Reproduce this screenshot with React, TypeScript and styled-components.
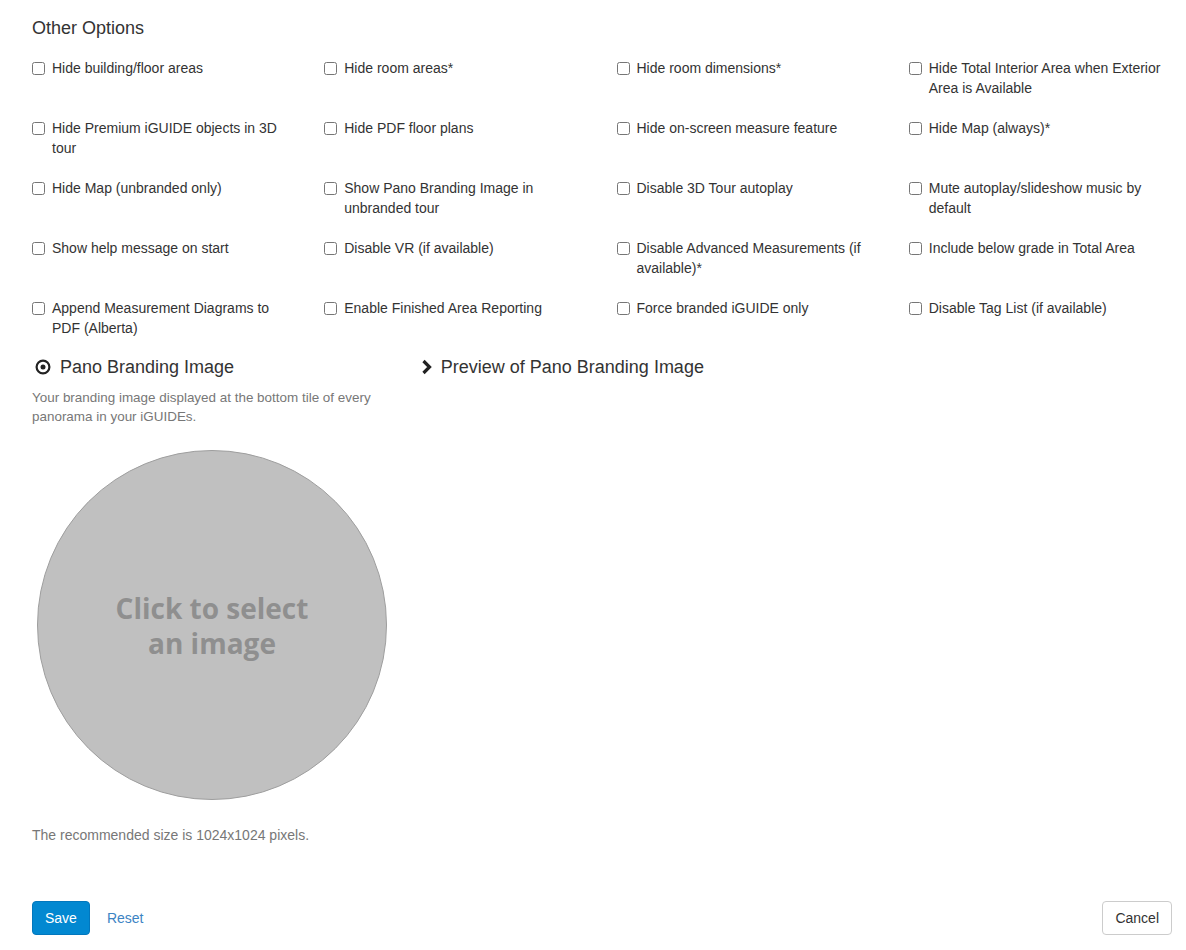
import React from "react";
import styled, { createGlobalStyle } from "styled-components";

const GlobalStyle = createGlobalStyle`
  html, body { margin: 0; padding: 0; background: #fff; }
  body {
    font-family: "Liberation Sans", Arial, Helvetica, sans-serif;
    font-size: 14px;
    line-height: 20px;
    color: #333;
  }
  * { box-sizing: border-box; }
`;

const Page = styled.div`
  width: 1186px;
  padding: 18px 14px 15px 17px;
`;

const SectionTitle = styled.h4`
  margin: 0 0 0 15px;
  font-size: 18px;
  font-weight: 400;
  line-height: 20px;
  color: #333;
`;

const OptionsGrid = styled.div`
  display: grid;
  grid-template-columns: repeat(4, 292.25px);
  row-gap: 20px;
  margin-top: 20px;
`;

const Option = styled.label`
  display: flex;
  align-items: flex-start;
  min-height: 40px;
  padding: 0 15px;
  cursor: pointer;
`;

const Box = styled.input`
  width: 13px;
  height: 13px;
  margin: 4px 7px 0 0;
  flex: 0 0 auto;
`;

const OptionText = styled.span`
  width: 242px;
`;

const Columns = styled.div`
  display: grid;
  grid-template-columns: 389.75px 779.5px;
  margin-top: 19px;
`;

const Col = styled.div`
  padding: 0 15px;
`;

const PanelHeading = styled.div`
  display: flex;
  align-items: center;
  gap: 9px;
  font-size: 18px;
  line-height: 20px;
  height: 20px;
  color: #333;
`;

const HeadingIcon = styled.svg<{ $offset: number }>`
  flex: 0 0 auto;
  margin-left: ${(p) => p.$offset}px;
`;

const Help = styled.p`
  margin: 11px 0 0;
  color: #777;
  font-size: 13.44px;
  line-height: 19px;
`;

const Drop = styled.div`
  width: 350px;
  height: 350px;
  margin: 24px 0 0 5px;
  border-radius: 50%;
  background: #c0c0c0;
  border: 1px solid #9e9e9e;
  display: flex;
  align-items: center;
  justify-content: center;
  text-align: center;
  cursor: pointer;
`;

const DropText = styled.span`
  font-family: "Open Sans", "Noto Sans", sans-serif;
  font-weight: 700;
  font-size: 28px;
  line-height: 35px;
  color: #8f8f8f;
  margin-top: 1px;
`;

const Note = styled.p`
  margin: 25px 0 0;
  color: #777;
  line-height: 20px;
`;

const Footer = styled.div`
  display: flex;
  align-items: center;
  margin-top: 56px;
  padding-left: 15px;
`;

const Button = styled.button<{ $primary?: boolean }>`
  height: 34px;
  padding: 6px 12px;
  font-family: inherit;
  font-size: 14px;
  line-height: 20px;
  border-radius: 4px;
  cursor: pointer;
  border: 1px solid ${(p) => (p.$primary ? "#0277bd" : "#ccc")};
  background: ${(p) => (p.$primary ? "#0288d1" : "#fff")};
  color: ${(p) => (p.$primary ? "#fff" : "#333")};
`;

const LinkButton = styled.a`
  margin-left: 17px;
  color: #3c84c4;
  text-decoration: none;
  cursor: pointer;
`;

const Spacer = styled.div`
  flex: 1;
`;

const options = [
  "Hide building/floor areas",
  "Hide room areas*",
  "Hide room dimensions*",
  "Hide Total Interior Area when Exterior Area is Available",
  "Hide Premium iGUIDE objects in 3D tour",
  "Hide PDF floor plans",
  "Hide on-screen measure feature",
  "Hide Map (always)*",
  "Hide Map (unbranded only)",
  "Show Pano Branding Image in unbranded tour",
  "Disable 3D Tour autoplay",
  "Mute autoplay/slideshow music by default",
  "Show help message on start",
  "Disable VR (if available)",
  "Disable Advanced Measurements (if available)*",
  "Include below grade in Total Area",
  "Append Measurement Diagrams to PDF (Alberta)",
  "Enable Finished Area Reporting",
  "Force branded iGUIDE only",
  "Disable Tag List (if available)",
];

export default function App() {
  return (
    <Page>
      <GlobalStyle />
      <SectionTitle>Other Options</SectionTitle>
      <OptionsGrid>
        {options.map((o) => (
          <Option key={o}>
            <Box type="checkbox" />
            <OptionText>{o}</OptionText>
          </Option>
        ))}
      </OptionsGrid>
      <Columns>
        <Col>
          <PanelHeading>
            <HeadingIcon $offset={3} width="16" height="16" viewBox="0 0 16 16">
              <circle cx="8" cy="8" r="6.4" fill="none" stroke="#222" strokeWidth="2.2" />
              <circle cx="8" cy="8" r="2.5" fill="#222" />
            </HeadingIcon>
            <span>Pano Branding Image</span>
          </PanelHeading>
          <Help>
            Your branding image displayed at the bottom tile of every panorama in your
            iGUIDEs.
          </Help>
          <Drop>
            <DropText>
              Click to select
              <br />
              an image
            </DropText>
          </Drop>
          <Note>The recommended size is 1024x1024 pixels.</Note>
        </Col>
        <Col>
          <PanelHeading>
            <HeadingIcon $offset={0} width="10" height="16" viewBox="0 0 10 16">
              <path d="M1.5 2 L7.5 8 L1.5 14" fill="none" stroke="#222" strokeWidth="3.2" strokeLinejoin="miter" />
            </HeadingIcon>
            <span>Preview of Pano Branding Image</span>
          </PanelHeading>
        </Col>
      </Columns>
      <Footer>
        <Button $primary>Save</Button>
        <LinkButton>Reset</LinkButton>
        <Spacer />
        <Button>Cancel</Button>
      </Footer>
    </Page>
  );
}
